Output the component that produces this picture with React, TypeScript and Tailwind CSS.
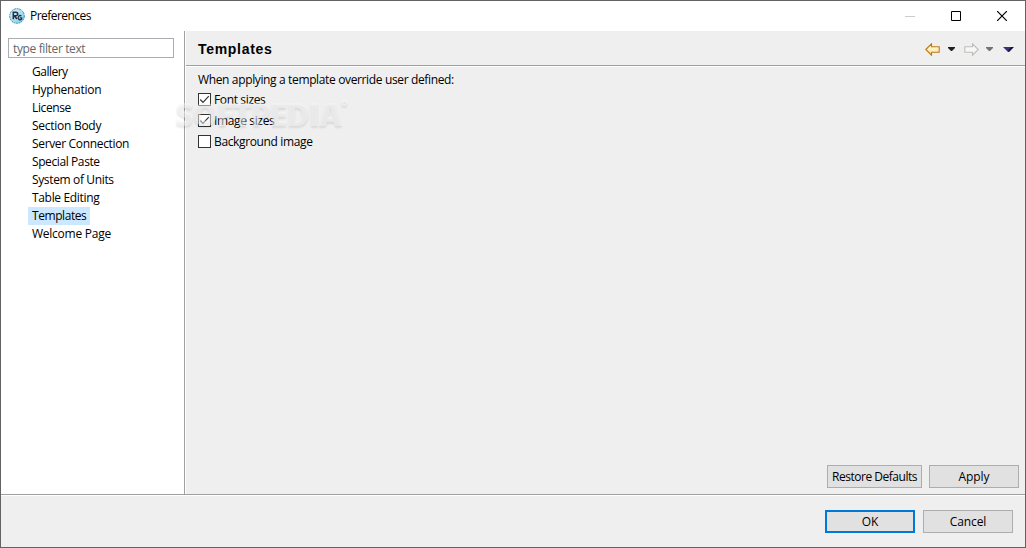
import React, { useState } from 'react';

const PAGES = [
  { name: 'Gallery', tracking: 'tracking-[-0.5px]' },
  { name: 'Hyphenation', tracking: 'tracking-[-0.27px]' },
  { name: 'License', tracking: 'tracking-[-0.38px]' },
  { name: 'Section Body', tracking: 'tracking-[-0.27px]' },
  { name: 'Server Connection', tracking: 'tracking-[-0.34px]' },
  { name: 'Special Paste', tracking: 'tracking-[-0.4px]' },
  { name: 'System of Units', tracking: 'tracking-[-0.36px]' },
  { name: 'Table Editing', tracking: 'tracking-[-0.33px]' },
  { name: 'Templates', tracking: 'tracking-[-0.43px]' },
  { name: 'Welcome Page', tracking: 'tracking-[-0.25px]' },
];

const AppIcon: React.FC = () => (
  <svg className="w-4 h-4 shrink-0" viewBox="0 0 16 16">
    <defs>
      <linearGradient id="ball" x1="0" y1="0" x2="1" y2="1">
        <stop offset="0" stopColor="#e2f6fd" />
        <stop offset="1" stopColor="#74cbee" />
      </linearGradient>
    </defs>
    <circle cx="8" cy="8" r="7.3" fill="url(#ball)" stroke="#2c86ad" strokeWidth=".9" strokeDasharray="2 .6" />
    <path d="M4.3 11.2V4.2h2.6a1.8 1.8 0 0 1 0 3.6H5.2l2.8 3.2" fill="none" stroke="#2b303c" strokeWidth="1.6" />
    <path d="M12.4 7.9a2.1 2.1 0 1 0 .2 3.4V9.9h-1.8" fill="none" stroke="#2b303c" strokeWidth="1.3" />
  </svg>
);

const ArrowLeft: React.FC = () => (
  <svg className="w-[15px] h-[13px]" viewBox="0 0 15 13">
    <defs>
      <linearGradient id="gold" x1="0" y1="0" x2="0" y2="1">
        <stop offset="0" stopColor="#fffbe9" />
        <stop offset="1" stopColor="#ffe38e" />
      </linearGradient>
    </defs>
    <path d="M.8 6.5 6.5.8v3h7.7v5.4H6.5v3z" fill="url(#gold)" stroke="#b87a1c" strokeWidth="1.1" />
  </svg>
);

const ArrowRight: React.FC = () => (
  <svg className="w-[15px] h-[13px]" viewBox="0 0 15 13">
    <path d="M14.2 6.5 8.5.8v3H.8v5.4h7.7v3z" fill="#f7f7f5" stroke="#bdbdba" strokeWidth="1.1" />
  </svg>
);

const Caret: React.FC<{ fill: string }> = ({ fill }) => (
  <svg className="block w-[7px] h-1" viewBox="0 0 7 4">
    <path d="M0 0h7v1L4 4H3L0 1z" fill={fill} />
  </svg>
);

const Checkbox: React.FC<{ label: string; checked: boolean; onToggle: () => void }> = ({ label, checked, onToggle }) => (
  <button className="flex h-[21px] items-center gap-[3px]" role="checkbox" aria-checked={checked} onClick={onToggle}>
    <svg className="w-[13px] h-[13px]" viewBox="0 0 13 13">
      <rect x=".5" y=".5" width="12" height="12" fill="#fff" stroke="#333" />
      {checked && <path d="M2.3 6.5 5 9.3 10.8 3.2" fill="none" stroke="#333" strokeWidth="1.2" />}
    </svg>
    <span>{label}</span>
  </button>
);

const BUTTON = 'flex h-[23px] items-center justify-center border border-[#adadad] bg-[#e1e1e1]';

export default function App() {
  const [filter, setFilter] = useState('');
  const [selected, setSelected] = useState('Templates');
  const [overrides, setOverrides] = useState([
    { label: 'Font sizes', checked: true },
    { label: 'Image sizes', checked: true },
    { label: 'Background image', checked: false },
  ]);

  const toggle = (index: number) => {
    setOverrides(overrides.map((o, i) => (i === index ? { ...o, checked: !o.checked } : o)));
  };

  const pages = PAGES.filter(p => p.name.toLowerCase().includes(filter.toLowerCase()));

  return (
    <div className="relative flex h-[548px] w-[1026px] flex-col overflow-hidden border border-[#636363] bg-[#efefef] font-['Open_Sans','Noto_Sans',sans-serif] text-[12px] leading-[18px] tracking-[-0.1px] text-black">
      <header className="flex h-[30px] shrink-0 items-center bg-white pl-2">
        <AppIcon />
        <h1 className="ml-[5px] grow tracking-[-0.55px]">Preferences</h1>
        <div className="flex items-center">
          <button className="flex w-[46px] justify-center" aria-label="Minimize">
            <svg className="w-[10px] h-[10px]" viewBox="0 0 10 10"><path d="M0 5.5h10" stroke="#ccc" /></svg>
          </button>
          <button className="flex w-[46px] justify-center" aria-label="Maximize">
            <svg className="w-[10px] h-[10px]" viewBox="0 0 10 10"><path d="M.5.5h9v9h-9z" fill="none" stroke="#000" /></svg>
          </button>
          <button className="flex w-[46px] justify-center" aria-label="Close">
            <svg className="w-[10px] h-[10px]" viewBox="0 0 10 10"><path d="m0 0 10 10M10 0 0 10" stroke="#000" strokeWidth="1.2" /></svg>
          </button>
        </div>
      </header>

      <div className="flex h-[463px] shrink-0">
        <nav className="w-[184px] shrink-0 border-r border-[#a0a0a0] bg-white pl-[7px] pt-[7px]">
          <input
            className="block h-5 w-[166px] border border-[#abadb3] px-1 tracking-[-0.37px] outline-none placeholder:text-[#666]"
            placeholder="type filter text"
            value={filter}
            onChange={e => setFilter(e.target.value)}
          />
          <ul className="flex flex-col items-start pl-5 pt-[5px]">
            {pages.map(page => (
              <li key={page.name}>
                <button
                  className={`block h-[18px] px-1 ${page.tracking} ${page.name === selected ? 'bg-[#cce8ff]' : ''}`}
                  onClick={() => setSelected(page.name)}
                >
                  {page.name}
                </button>
              </li>
            ))}
          </ul>
        </nav>

        <main className="flex grow flex-col border-l border-white">
          <div className="flex h-9 shrink-0 items-center justify-between border-b border-white pl-3 pt-px shadow-[inset_0_-1px_0_#a0a0a0]">
            <h2 className="font-['Liberation_Sans',sans-serif] text-[14px] font-bold tracking-[0.7px]">Templates</h2>
            <div className="flex items-center pr-[11px]">
              <ArrowLeft />
              <span className="ml-2"><Caret fill="#202020" /></span>
              <span className="ml-[9px]"><ArrowRight /></span>
              <span className="ml-[7px]"><Caret fill="#747474" /></span>
              <svg className="ml-[10px] w-[11px] h-[5px]" viewBox="0 0 11 5">
                <path d="M0 0h11L6 5H5z" fill="#353080" />
                <path d="M10.5 0 6 4.8 5 4 8.5 0z" fill="#111" />
              </svg>
            </div>
          </div>
          <div className="flex grow flex-col items-start pl-3 pt-1 tracking-[-0.36px]">
            <p>When applying a template override user defined:</p>
            {overrides.map((o, i) => (
              <Checkbox key={o.label} label={o.label} checked={o.checked} onToggle={() => toggle(i)} />
            ))}
          </div>
          <div className="flex justify-end gap-[7px] pb-[6px] pr-[6px]">
            <button className={`${BUTTON} w-[95px] tracking-[-0.48px]`}>Restore Defaults</button>
            <button className={`${BUTTON} w-[90px]`}>Apply</button>
          </div>
        </main>
      </div>

      <footer className="flex grow items-center justify-end gap-2 border-t border-[#a0a0a0] pr-3 pt-px shadow-[inset_0_1px_0_#fff]">
        <button className="flex h-[23px] w-[90px] items-center justify-center border-2 border-[#0078d7] bg-[#e1e1e1]">OK</button>
        <button className={`${BUTTON} w-[90px]`}>Cancel</button>
      </footer>

      {/* Watermark laid over the panel */}
      <div className="pointer-events-none absolute left-[174px] top-[95px] flex items-start font-['Open_Sans',sans-serif] text-[32px] font-extrabold leading-[36px] tracking-[-1.1px] text-[#f8f8f8]/50 [text-shadow:0px_2px_2px_rgba(0,0,0,0.09)]">
        SOFTPEDIA
        <span className="text-[16px] leading-[20px]">°</span>
      </div>
    </div>
  );
}
